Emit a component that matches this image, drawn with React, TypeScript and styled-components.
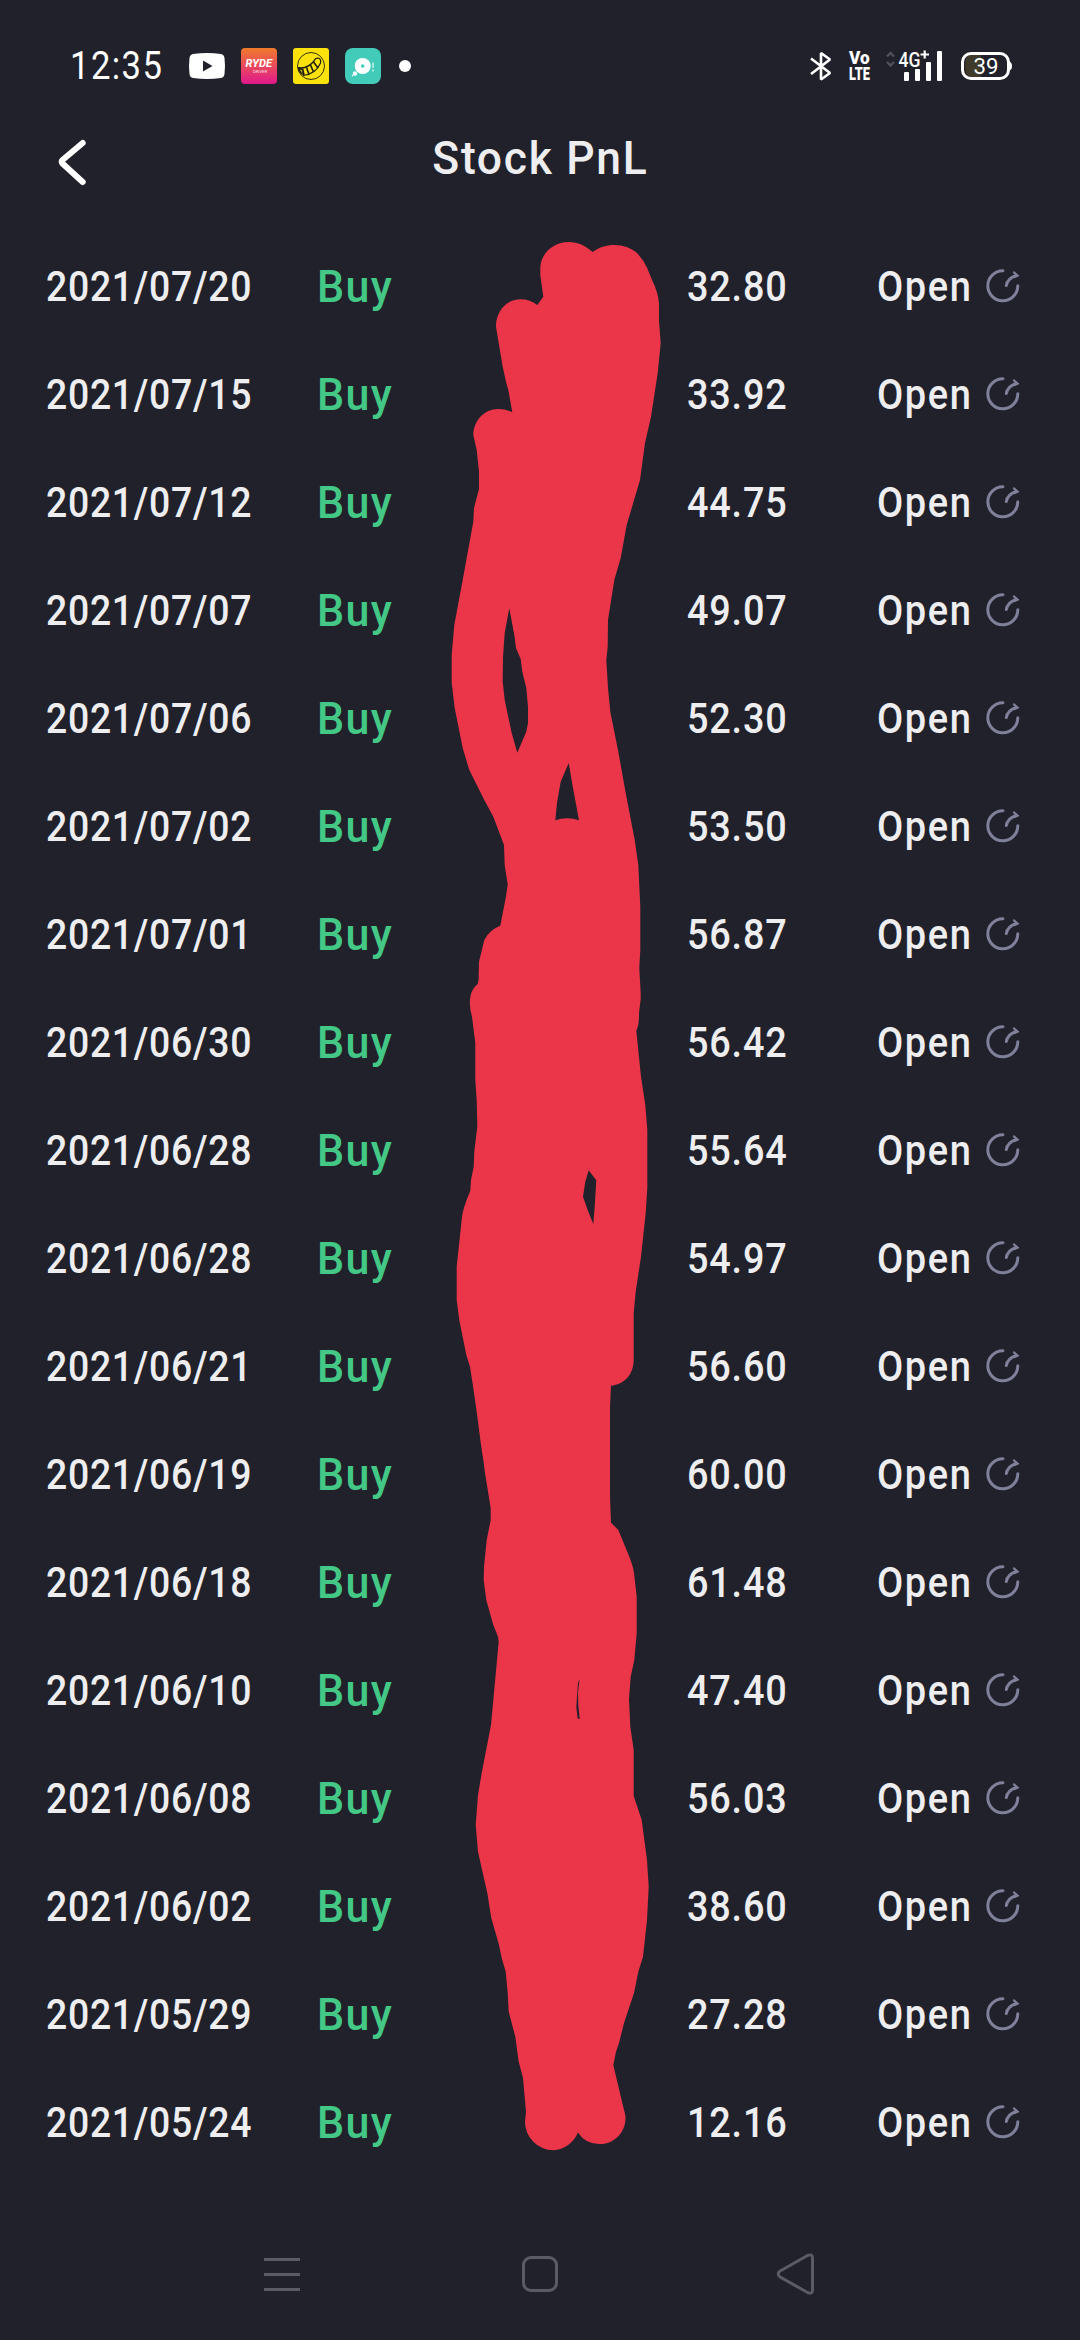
import React from "react";
import styled, { createGlobalStyle } from "styled-components";

const GlobalStyle = createGlobalStyle`
  * { box-sizing: border-box; }
  body { margin: 0; background: #21212b; }
`;

const Screen = styled.div`
  position: relative;
  display: flex;
  flex-direction: column;
  width: 1080px;
  height: 2340px;
  overflow: hidden;
  background: #21212b;
  color: #eeeef0;
  font-family: Roboto, "Liberation Sans", sans-serif;
`;

const StatusBar = styled.div`
  display: flex;
  align-items: center;
  justify-content: space-between;
  height: 132px;
  padding: 0 68px 0 70px;
  color: #fff;

  svg { overflow: visible; }
`;

const StatusGroup = styled.div`
  display: flex;
  align-items: center;
`;

/* Horizontally condensed text run */
const Condensed = styled.span<{ $scale: number; $spacing?: number }>`
  display: block;
  white-space: nowrap;
  transform: scaleX(${(p) => p.$scale});
  transform-origin: left center;
  letter-spacing: ${(p) => p.$spacing ?? 0}px;
`;

const Clock = styled.div`
  width: 119px;
  font-size: 38px;
  line-height: 44px;
`;

const AppIcons = styled.div`
  display: flex;
  align-items: center;
  gap: 16px;
`;

const Header = styled.header`
  display: grid;
  grid-template-columns: 56px 1fr 56px;
  align-items: start;
  height: 100px;
  padding: 0 50px;
`;

const BackButton = styled.button`
  display: block;
  width: 56px;
  height: 60px;
  padding: 0;
  border: 0;
  background: none;
`;

const Title = styled.h1`
  display: flex;
  justify-content: center;
  margin: 0;
  font-size: 47px;
  font-weight: 500;
  line-height: 52px;

  & > span { transform-origin: center; }
`;

const List = styled.main`
  display: flex;
  flex-direction: column;
`;

const Row = styled.div`
  display: grid;
  grid-template-columns: 271px 370px 190px 109px 34px;
  align-items: center;
  height: 108px;
  padding-left: 46px;
`;

const Cell = styled.div`
  padding-top: 2px;
  font-size: 42px;
  font-weight: 500;
  line-height: 50px;
`;

const Side = styled(Cell)`
  color: #43c886;
  font-size: 45px;
`;

const NavBar = styled.nav`
  display: grid;
  grid-template-columns: 257px 255px 40px;
  align-items: center;
  height: 132px;
  margin-top: auto;
  padding-left: 264px;
`;

const Scribble = styled.svg`
  position: absolute;
  inset: 0;
  pointer-events: none;
`;

const trades = [
  ["2021/07/20", "32.80"],
  ["2021/07/15", "33.92"],
  ["2021/07/12", "44.75"],
  ["2021/07/07", "49.07"],
  ["2021/07/06", "52.30"],
  ["2021/07/02", "53.50"],
  ["2021/07/01", "56.87"],
  ["2021/06/30", "56.42"],
  ["2021/06/28", "55.64"],
  ["2021/06/28", "54.97"],
  ["2021/06/21", "56.60"],
  ["2021/06/19", "60.00"],
  ["2021/06/18", "61.48"],
  ["2021/06/10", "47.40"],
  ["2021/06/08", "56.03"],
  ["2021/06/02", "38.60"],
  ["2021/05/29", "27.28"],
  ["2021/05/24", "12.16"],
];

const YouTubeIcon = () => (
  <svg width="36" height="36" viewBox="0 0 36 36">
    <path d="M4 6Q18 4 32 6Q35 6.500 35.500 10Q36.500 18 35.500 26Q35 29.500 32 30Q18 32 4 30Q1 29.500 .5 26Q-.5 18 .5 10Q1 6.500 4 6Z" fill="#fff" />
    <path d="M14 12.500V23.500L23.500 18Z" fill="#21212b" />
  </svg>
);

const RydeIcon = () => (
  <svg width="36" height="36" viewBox="0 0 36 36">
    <defs>
      <linearGradient id="ryde" x1="0" y1="0" x2="0" y2="1">
        <stop offset="0" stopColor="#f07a2c" />
        <stop offset="0.5" stopColor="#e94a5c" />
        <stop offset="1" stopColor="#e0188c" />
      </linearGradient>
    </defs>
    <rect width="36" height="36" rx="4" fill="url(#ryde)" />
    <text x="4.500" y="19" fontSize="11.500" fontWeight="700" fontStyle="italic" fill="#fff" textLength="26.500" lengthAdjust="spacingAndGlyphs" fontFamily="Roboto, sans-serif">RYDE</text>
    <text x="12" y="24.500" fontSize="4.200" fill="#fff" fillOpacity="0.85" textLength="14" fontFamily="Roboto, sans-serif">DRIVER</text>
  </svg>
);

const SmileIcon = () => (
  <svg width="36" height="36" viewBox="0 0 36 36">
    <rect width="36" height="36" rx="3" fill="#fbe20c" />
    <g fill="none" stroke="#1d1d12">
      <circle cx="18" cy="18" r="13.500" strokeWidth="0.900" />
      <path d="M5 19.500Q14 21.500 21 13Q22 10 25 10Q28.500 11 27.500 15Q23 26 10 27.500" strokeWidth="1.200" />
      <path d="M9.500 20.500L11 27M13.500 19.500L16 26.500M17.500 17L20.500 24M20.500 14L25 20" strokeWidth="1.600" />
    </g>
    <path d="M4.500 19L9 20L10 27.500Q5.500 24.500 4.500 19Z" fill="#1d1d12" />
    <path d="M7 22L8.500 21.500L9 25Z" fill="#fbe20c" />
  </svg>
);

const ChatIcon = () => (
  <svg width="36" height="36" viewBox="0 0 36 36">
    <rect width="36" height="36" rx="8" fill="#42cbb9" />
    <circle cx="17.700" cy="18" r="8" fill="#fff" />
    <circle cx="10" cy="25.500" r="2.200" fill="#fff" />
    <circle cx="7.600" cy="27.600" r="0.800" fill="#fff" />
    <circle cx="17.700" cy="18" r="1.800" fill="#42cbb9" />
    <path d="M28 14.500V20" stroke="#d9f5f1" strokeWidth="1.300" />
    <circle cx="28" cy="22.500" r="0.900" fill="#d9f5f1" />
  </svg>
);

const NotificationDot = styled.i`
  width: 12px;
  height: 12px;
  margin-left: 2px;
  border-radius: 50%;
  background: #fff;
`;

const Bluetooth = styled.svg`
  margin-right: 16px;
`;

const BluetoothIcon = () => (
  <Bluetooth width="24" height="32" viewBox="0 0 24 32">
    <path d="M2 8.500L21 23L12 29.500V3L21 9.500L2 24" fill="none" stroke="#fff" strokeWidth="2.600" strokeLinejoin="bevel" />
  </Bluetooth>
);

const Volte = styled.div`
  width: 22px;
  height: 32px;
  font-size: 18.5px;
  font-weight: 900;
  line-height: 16px;
`;

const VolteIcon = () => (
  <Volte>
    <Condensed $scale={0.93}>Vo</Condensed>
    <Condensed $scale={0.69}>LTE</Condensed>
  </Volte>
);

const Signal = styled.svg`
  margin-left: 15px;
  margin-right: 17px;
`;

const SignalIcon = () => (
  <Signal width="58" height="32" viewBox="0 0 58 32">
    <path d="M1 6.500L4.500 3L8 6.500M1 12L4.500 15.500L8 12" fill="none" stroke="#50505a" strokeWidth="2.400" />
    <text x="12.500" y="16.500" fontSize="20.500" fontWeight="500" fill="#fff" textLength="22" lengthAdjust="spacingAndGlyphs" fontFamily="Roboto, sans-serif">4G</text>
    <path d="M34.500 4.500H43M38.700 0.500V8.500" stroke="#fff" strokeWidth="2.200" />
    <g fill="#fff">
      <rect x="18" y="22" width="5" height="9" rx="1" />
      <rect x="29" y="19" width="5" height="12" rx="1" />
      <rect x="40" y="12" width="5" height="19" rx="1" />
      <rect x="51" y="1" width="5" height="30" rx="1" />
    </g>
  </Signal>
);

const BatteryIcon = () => (
  <svg width="51" height="30" viewBox="0 0 51 30">
    <path d="M4 15Q4 4 10 4H20V26H10Q4 26 4 15Z" fill="#403a2b" />
    <rect x="1.500" y="2.500" width="46" height="25" rx="8.500" fill="none" stroke="#fff" strokeWidth="3" />
    <path d="M48 10.500Q51 11 51 15T48 19.500Z" fill="#fff" />
    <text x="12.500" y="23" fontSize="22.500" fill="#fff" textLength="25" lengthAdjust="spacingAndGlyphs" fontFamily="Roboto, sans-serif">39</text>
  </svg>
);

const ShareIcon = () => (
  <svg width="34" height="34" viewBox="0 0 34 34" fill="none" stroke="#7f8099" strokeWidth="3" strokeLinecap="round">
    <path d="M17 1.800A15 15 0 1 0 31.800 16.800" />
    <path d="M20.300 16.500Q21.500 9.500 30 6.500" />
    <path d="M27.500 2L33.300 7L28 8.500L29.500 6.500Z" fill="#7f8099" stroke="none" />
    <path d="M28 3.500L31.500 6.700L28.500 8" strokeWidth="2.200" />
  </svg>
);

const outline =
  "M540.300 275V268C540.500 254 553 242 568.700 242C578 242 585 245.500 592.700 252C600 247 606 245 614.300 245C623 245 631 248 636.700 252.700Q643 259 647.300 268.300L651.700 279.300Q658 292 659 303.300V321L660.700 343L657.700 373L651 416.700L645 443L640 480L626.700 525L620.700 558L614.300 580L608 620L607.700 646.700L606.300 660L608 688L610.300 711.700L618.300 751.700L625.700 793L634.700 840L638.300 865L640.300 906.700V950L639.300 968L640.700 993V999L639 1013Q639.300 1025 636.300 1030.700L641 1076.700L645.300 1105L647.300 1130V1188L645.700 1213L641 1256.700L635.700 1291.700L633.700 1313V1360C633.500 1375 624 1384.500 611 1385.700L610 1406.700V1496.700L611 1522.700L618.300 1530L627.300 1551.700Q633 1565 634 1573L636.700 1596.700V1633L634.300 1660L630.700 1676.700L629 1699L630.300 1726.700L633.700 1750V1796L641.700 1820L647 1860L648.700 1886.700L647 1920L643 1956.700L638.300 1971.700L634 1993L624 2023L619 2043L616 2051.700L613.300 2065L624 2110A25.500 25.500 0 0 1 599.300 2144A25.500 25.500 0 0 1 577.900 2132.500A28.500 28.500 0 0 1 553.300 2150.300A28.500 28.500 0 0 1 525 2121.700L526 2111.700L523 2078L518.700 2061.700L515.300 2036.700L508.700 2011.700L507.700 1993L505.700 1971.700L501.700 1958L499 1945L491.300 1918L487.300 1893L478 1851.700L475.700 1825L478 1795L481.700 1773L491 1725L498.700 1641.700L498 1636.700L493.300 1625L486.300 1600L483.700 1580L484 1566.700L486.700 1540L490.700 1520V1508L485 1473L483.300 1460L481 1445L476.700 1411.700L473.300 1388L470 1366.700L466.300 1355L459.300 1320L456.700 1300V1266.700L462 1216.700Q463 1208 470.300 1190.700L471 1180L473.700 1166.700L474.300 1151.700L477.300 1126.700L476.700 1100L475.300 1080V1043L472 1016.700Q468.500 1005 470.700 995Q472.500 988 477.700 984Q479 980 478.700 975L479 961.700L484.300 940Q489 930 500.300 925.700L505.700 898L507.700 884.700L504.700 865L504 845L493.300 816.700L484.300 800L469.300 770L462.700 748L454.700 708L451.700 683V655L454.300 625L462.700 580L473.300 521.700L474 508L479 489V471.700L476.700 450L473.300 435C473.500 421 484 409 498.300 409Q506 409 512.300 412.300L508.300 390L506.300 383L502.700 366.700L496 326.700C495.800 312 506 299.300 520.700 299.300Q530 299.300 537.300 305L543.300 296.700Z";
const holes = [
  "M509.300 608.300L514.300 635L516 648L520.700 659L522.300 671.700L526.300 688L528 706.700V723L526.300 731.700L517.300 752.700L511.700 733L504.700 700L502.700 681.700L503 656.700L504.700 633Z",
  "M568.700 763L573 788L579 820.300Q567 816 555.300 820.300L557 803L560.700 781.700Z",
  "M588.700 1170.300L596.300 1180.300L594.700 1206.700L593.300 1224L588.300 1211.700L583 1196.700L585.300 1181.700Z",
  "M579.500 1679L578 1693L578.300 1705L579.700 1718.700H577.700L576.300 1706.700L577.300 1693L578 1683Z",
];

export default function App() {
  return (
    <>
      <GlobalStyle />
      <Screen>
        <StatusBar>
          <StatusGroup>
            <Clock><Condensed $scale={0.91} $spacing={1.6}>12:35</Condensed></Clock>
            <AppIcons>
              <YouTubeIcon />
              <RydeIcon />
              <SmileIcon />
              <ChatIcon />
              <NotificationDot />
            </AppIcons>
          </StatusGroup>
          <StatusGroup>
            <BluetoothIcon />
            <VolteIcon />
            <SignalIcon />
            <BatteryIcon />
          </StatusGroup>
        </StatusBar>
        <Header>
          <BackButton aria-label="Back">
            <svg width="56" height="60" viewBox="0 0 56 60" fill="none" stroke="#fff" strokeWidth="6" strokeLinecap="round" strokeLinejoin="round">
              <path d="M32.700 11L12.500 28Q11 29.700 12.500 31.500L32.700 50" />
            </svg>
          </BackButton>
          <Title><Condensed $scale={0.945} $spacing={1.8}>Stock PnL</Condensed></Title>
        </Header>
        <List>
          {trades.map(([date, price], i) => (
            <Row key={i}>
              <Cell><Condensed $scale={0.89} $spacing={0.8}>{date}</Condensed></Cell>
              <Side><Condensed $scale={0.955} $spacing={1.4}>Buy</Condensed></Side>
              <Cell><Condensed $scale={0.9} $spacing={0.9}>{price}</Condensed></Cell>
              <Cell><Condensed $scale={0.905} $spacing={1.8}>Open</Condensed></Cell>
              <ShareIcon />
            </Row>
          ))}
        </List>
        <NavBar>
          <svg width="36" height="40" viewBox="0 0 36 40" stroke="#5b5b64" strokeWidth="3">
            <path d="M0 5.500H36M0 20.500H36M0 35.500H36" />
          </svg>
          <svg width="38" height="40" viewBox="0 0 38 40" fill="none" stroke="#5b5b64" strokeWidth="3">
            <rect x="2.500" y="3.500" width="33" height="33" rx="7.500" />
          </svg>
          <svg width="40" height="42" viewBox="0 0 40 42" fill="none" stroke="#5b5b64" strokeWidth="3">
            <path d="M3.700 18.300L31.500 2.500Q36.500 .5 36.500 5V37Q36.500 41.500 31.500 39.500L3.700 23.700Q.8 21 3.700 18.300Z" />
          </svg>
        </NavBar>
        <Scribble width="1080" height="2340" viewBox="0 0 1080 2340">
          <path d={outline + holes.join("")} fill="#ea3648" fillRule="evenodd" />
        </Scribble>
      </Screen>
    </>
  );
}
